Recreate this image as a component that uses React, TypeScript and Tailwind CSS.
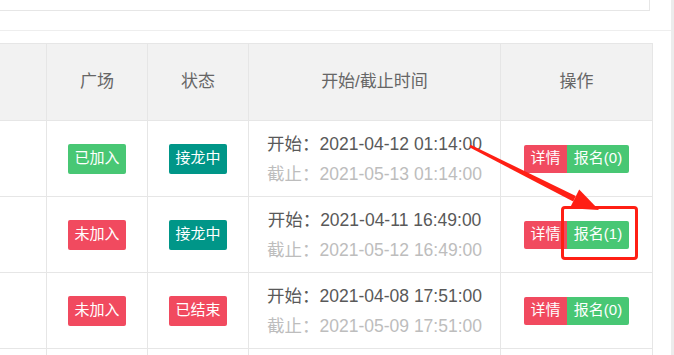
import React from "react";

type Row = {
  joined: boolean;
  status: "going" | "ended";
  start: string;
  end: string;
  count: number;
};

const rows: Row[] = [
  { joined: true, status: "going", start: "2021-04-12 01:14:00", end: "2021-05-13 01:14:00", count: 0 },
  { joined: false, status: "going", start: "2021-04-11 16:49:00", end: "2021-05-12 16:49:00", count: 1 },
  { joined: false, status: "ended", start: "2021-04-08 17:51:00", end: "2021-05-09 17:51:00", count: 0 },
];

const cell = "border-r border-b border-[#e6e6e6] flex items-center justify-center";
const head = `${cell} h-[77px] bg-[#f2f2f2] text-[17px] text-[#666]`;

export default function App() {
  return (
    <div
      className="relative flex w-[674px] h-[355px] overflow-hidden bg-white"
      style={{ fontFamily: '"Liberation Sans", "Noto Sans CJK SC", sans-serif' }}
    >
      <div className="w-[671px] flex flex-col">
        <div className="h-[31px] border-b border-[#eeeeee] shrink-0">
          <div className="h-[11px] w-[650px] border-r border-b border-[#e6e6e6]" />
        </div>
        <div className="pt-[12px]">
          <div className="w-[653px] border-t border-[#e6e6e6] grid grid-cols-[47px_101px_101px_252px_152px]">
            {/* header */}
            <div className={head} />
            <div className={head}>广场</div>
            <div className={head}>状态</div>
            <div className={head}>开始/截止时间</div>
            <div className={head}>操作</div>

            {rows.map((r, i) => (
              <React.Fragment key={i}>
                <div className={`${cell} h-[76px]`} />
                <div className={`${cell} h-[76px]`}>
                  <span
                    className={`w-[58px] h-[30px] rounded-[2px] flex items-center justify-center text-[15px] text-white ${
                      r.joined ? "bg-[#48c774]" : "bg-[#f14a5f]"
                    }`}
                  >
                    {r.joined ? "已加入" : "未加入"}
                  </span>
                </div>
                <div className={`${cell} h-[76px]`}>
                  <span
                    className={`w-[58px] h-[30px] rounded-[2px] flex items-center justify-center text-[15px] text-white ${
                      r.status === "going" ? "bg-[#009688]" : "bg-[#f14a5f]"
                    }`}
                  >
                    {r.status === "going" ? "接龙中" : "已结束"}
                  </span>
                </div>
                <div className={`${cell} h-[76px] flex-col text-[17.5px] leading-[30px]`}>
                  <div className="text-[#595959]">开始：{r.start}</div>
                  <div className="text-[#bdbdbd]">截止：{r.end}</div>
                </div>
                <div className={`${cell} h-[76px]`}>
                  <div className="flex h-[28px] text-[15px] text-white">
                    <span className="w-[43px] flex items-center justify-center bg-[#f14a5f] rounded-l-[2px]">详情</span>
                    <span className="w-[62px] flex items-center justify-center bg-[#48c774] rounded-r-[2px]">
                      报名({r.count})
                    </span>
                  </div>
                </div>
              </React.Fragment>
            ))}

            <div className={`${cell} h-[76px]`} />
            <div className={`${cell} h-[76px]`} />
            <div className={`${cell} h-[76px]`} />
            <div className={`${cell} h-[76px]`} />
            <div className={`${cell} h-[76px]`} />
          </div>
        </div>
      </div>
      <div className="w-[3px] bg-[#ececec]" />

      {/* annotation: arrow + highlight box */}
      <svg className="absolute left-0 top-0 pointer-events-none" width="674" height="355">
        <polygon points="469.4,147.3 573.2,201.6 575.8,196.0 470.6,144.7" fill="#ff1f14" />
        <polygon points="599,210 569.8,208.2 579.2,189.4" fill="#ff1f14" />
      </svg>
      <div className="absolute left-[561px] top-[206px] w-[77px] h-[54px] border-[3px] border-[#ff1f14] rounded-[4px]" />
    </div>
  );
}
